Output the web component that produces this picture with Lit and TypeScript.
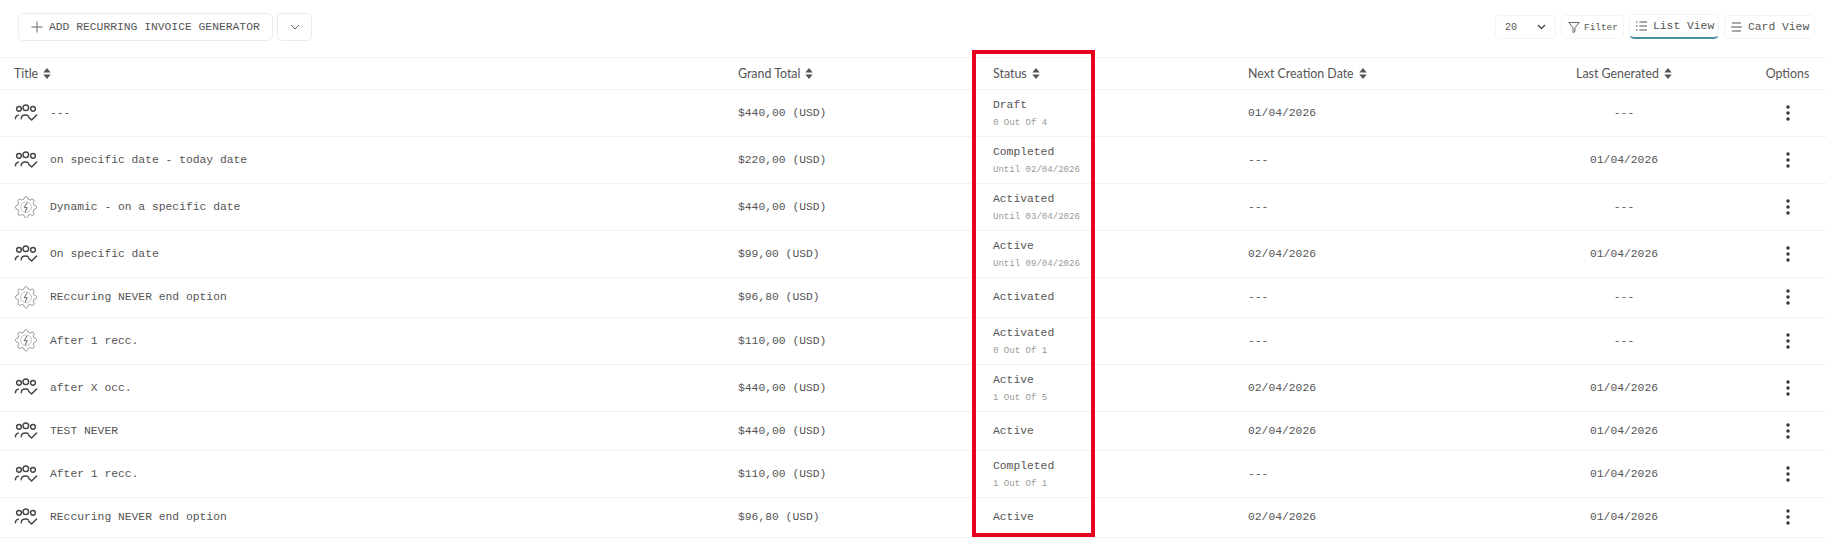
import { LitElement, css, html, svg } from 'lit';
import { customElement } from 'lit/decorators.js';

type Row = {
  kind: 'people' | 'gear';
  title: string;
  total: string;
  status: string;
  sub?: string;
  next: string;
  last: string;
};

const rows: Row[] = [
  { kind: 'people', title: '---', total: '$440,00 (USD)', status: 'Draft', sub: '0 Out Of 4', next: '01/04/2026', last: '---' },
  { kind: 'people', title: 'on specific date - today date', total: '$220,00 (USD)', status: 'Completed', sub: 'Until 02/04/2026', next: '---', last: '01/04/2026' },
  { kind: 'gear', title: 'Dynamic - on a specific date', total: '$440,00 (USD)', status: 'Activated', sub: 'Until 03/04/2026', next: '---', last: '---' },
  { kind: 'people', title: 'On specific date', total: '$99,00 (USD)', status: 'Active', sub: 'Until 09/04/2026', next: '02/04/2026', last: '01/04/2026' },
  { kind: 'gear', title: 'REccuring NEVER end option', total: '$96,80 (USD)', status: 'Activated', next: '---', last: '---' },
  { kind: 'gear', title: 'After 1 recc.', total: '$110,00 (USD)', status: 'Activated', sub: '0 Out Of 1', next: '---', last: '---' },
  { kind: 'people', title: 'after X occ.', total: '$440,00 (USD)', status: 'Active', sub: '1 Out Of 5', next: '02/04/2026', last: '01/04/2026' },
  { kind: 'people', title: 'TEST NEVER', total: '$440,00 (USD)', status: 'Active', next: '02/04/2026', last: '01/04/2026' },
  { kind: 'people', title: 'After 1 recc.', total: '$110,00 (USD)', status: 'Completed', sub: '1 Out Of 1', next: '---', last: '01/04/2026' },
  { kind: 'people', title: 'REccuring NEVER end option', total: '$96,80 (USD)', status: 'Active', next: '02/04/2026', last: '01/04/2026' },
];

// gear outline with 8 rounded cogs
const gearPath = () => {
  const pts: string[] = [];
  const cogs = 8;
  for (let i = 0; i < cogs; i++) {
    const a = (i / cogs) * Math.PI * 2;
    const step = (Math.PI * 2) / cogs;
    const p = (r: number, t: number) =>
      `${(12 + r * Math.cos(t)).toFixed(2)} ${(11 + r * Math.sin(t)).toFixed(2)}`;
    const start = p(8.6, a - step * 0.28);
    const end = p(8.6, a + step * 0.28);
    const c1 = p(11.6, a - step * 0.2);
    const c2 = p(11.6, a + step * 0.2);
    const nextStart = p(8.6, a + step * 0.72);
    const mid = p(8, a + step * 0.5);
    pts.push(`${i === 0 ? 'M' : 'L'}${start} C${c1} ${c2} ${end} Q${mid} ${nextStart}`);
  }
  return pts.join(' ') + ' Z';
};

const peopleIcon = html`<svg class="row-icon" viewBox="0 0 24 22" fill="none" stroke="#444" stroke-linecap="round" stroke-linejoin="round">
  <circle cx="5" cy="6.6" r="2.4" stroke-width="1.4"></circle>
  <circle cx="11.8" cy="5.6" r="2.8" stroke-width="1.4"></circle>
  <circle cx="19" cy="6.6" r="2.4" stroke-width="1.4"></circle>
  <path d="M1.4 16.5c0-2 1.2-3.2 3-3.6" stroke-width="1.4"></path>
  <path d="M7.2 16.5c0-2.4 1.6-3.8 4.2-3.8 1.3 0 2.4.4 3.1 1.1" stroke-width="1.4"></path>
  <path d="M14.6 15l3 2.8 5-5" stroke-width="1.5"></path>
</svg>`;

const gearIcon = html`<svg class="row-icon" viewBox="0 0 24 22" fill="none" stroke="#777" stroke-linejoin="round">
  <path d=${gearPath()} stroke-width=".8"></path>
  <circle cx="12" cy="11" r="5.4" stroke="#aaa" stroke-width=".7"></circle>
  <path d="M13 6.8l-2.8 4.6h3l-1.8 4" stroke="#555" stroke-width=".9" stroke-linecap="round"></path>
</svg>`;

const sortIcon = html`<svg class="sort" viewBox="0 0 8 11" fill="#555">
  <path d="M4 0l3.7 4.6H.3z"></path>
  <path d="M4 11L.3 6.4h7.4z"></path>
</svg>`;

const kebab = html`<svg class="kebab" viewBox="0 0 6 16" fill="#333">
  ${[2, 8, 14].map((y) => svg`<circle cx="3" cy=${y} r="1.7"></circle>`)}
</svg>`;

@customElement('app-root')
export class AppRoot extends LitElement {
  static styles = css`
    :host {
      display: block;
      position: relative;
      height: 540px;
      background: #fff;
      color: #555;
      font-family: 'Liberation Mono', monospace;
      font-size: 11.33px;
      overflow: hidden;
    }

    .toolbar {
      height: 57px;
      box-sizing: border-box;
      display: flex;
      justify-content: space-between;
      align-items: flex-start;
      padding: 13px 12px 0 18px;
    }
    .left,
    .right {
      display: flex;
    }
    .left {
      gap: 4px;
    }
    .right {
      gap: 5px;
      padding-top: 2px;
    }

    .btn {
      display: flex;
      align-items: center;
      box-sizing: border-box;
      border: 1px solid #ececec;
      border-radius: 5px;
      background: #fff;
    }
    .add {
      width: 255px;
      height: 28px;
      padding-left: 12px;
      gap: 6px;
    }
    .more {
      width: 35px;
      height: 28px;
      justify-content: center;
    }
    .select {
      width: 61px;
      height: 24px;
      padding: 0 9px;
      justify-content: space-between;
      border-color: #f3f3f3;
      font-size: 10px;
    }
    .filter {
      width: 63px;
      height: 24px;
      padding-left: 6px;
      gap: 4px;
      border-color: #f3f3f3;
      font-size: 9.4px;
    }
    .list {
      width: 90px;
      height: 25px;
      margin-top: -1px;
      padding-left: 6px;
      gap: 6px;
      border-color: #f3f3f3;
      border-bottom: 2px solid #4a8fa5;
    }
    .card {
      width: 91px;
      height: 24px;
      padding-left: 6px;
      gap: 6px;
      border-color: #f3f3f3;
    }

    .head,
    .row {
      display: grid;
      grid-template-columns: 724px 255px 255px 266px 248px 79px;
      border-bottom: 1px solid #f2f2f2;
    }
    .head {
      height: 33px;
      box-sizing: border-box;
      border-top: 1px solid #f2f2f2;
      align-items: center;
      font-family: Lato, sans-serif;
      font-size: 12.4px;
    }
    .cell {
      display: flex;
      align-items: center;
      gap: 5px;
      padding-left: 14px;
    }
    .center {
      justify-content: center;
      padding-left: 0;
    }
    .sort {
      width: 8px;
      height: 11px;
    }

    .row {
      padding: 8px 0;
      align-items: center;
    }
    .name {
      gap: 12px;
    }
    .row-icon {
      width: 24px;
      height: 22.5px;
      flex: none;
    }
    .status {
      display: flex;
      flex-direction: column;
      gap: 5px;
      padding-left: 14px;
      line-height: 14px;
    }
    .sub {
      font-size: 9.05px;
      line-height: 11px;
      color: #999;
    }
    .kebab {
      width: 6px;
      height: 16px;
    }

    .highlight {
      position: absolute;
      left: 972px;
      top: 50px;
      width: 123px;
      height: 487px;
      box-sizing: border-box;
      border: 4px solid #e8001f;
      pointer-events: none;
    }
  `;

  renderRow(r: Row) {
    return html`
      <div class="row">
        <div class="cell name">${r.kind === 'people' ? peopleIcon : gearIcon}<span>${r.title}</span></div>
        <div class="cell">${r.total}</div>
        <div class="status">
          <span>${r.status}</span>
          ${r.sub ? html`<span class="sub">${r.sub}</span>` : ''}
        </div>
        <div class="cell">${r.next}</div>
        <div class="cell center">${r.last}</div>
        <div class="cell center">${kebab}</div>
      </div>
    `;
  }

  render() {
    return html`
      <div class="toolbar">
        <div class="left">
          <div class="btn add">
            <svg width="12" height="12" viewBox="0 0 12 12" stroke="#666" fill="none"><path d="M6 .5v11M.5 6h11"></path></svg>
            <span>ADD RECURRING INVOICE GENERATOR</span>
          </div>
          <div class="btn more">
            <svg width="10" height="6" viewBox="0 0 10 6" stroke="#666" fill="none"><path d="M1 1l4 4 4-4"></path></svg>
          </div>
        </div>
        <div class="right">
          <div class="btn select">
            <span>20</span>
            <svg width="9" height="6" viewBox="0 0 9 6" stroke="#444" stroke-width="1.3" fill="none"><path d="M1 1l3.5 3.5L8 1"></path></svg>
          </div>
          <div class="btn filter">
            <svg width="12" height="12" viewBox="0 0 12 12" stroke="#666" fill="none" stroke-linejoin="round"><path d="M.8 1.5h10.4L7 6.6v3.9L5 11.5V6.6z"></path></svg>
            <span>Filter</span>
          </div>
          <div class="btn list">
            <svg width="11" height="10" viewBox="0 0 11 10" stroke="#555" stroke-width="1.2" fill="none"><path d="M0 1h1.6M3.4 1H11M0 5h1.6M3.4 5H11M0 9h1.6M3.4 9H11"></path></svg>
            <span>List View</span>
          </div>
          <div class="btn card">
            <svg width="11" height="10" viewBox="0 0 11 10" stroke="#555" stroke-width="1.2" fill="none"><path d="M1 1h9M0 5h11M1 9h9"></path></svg>
            <span>Card View</span>
          </div>
        </div>
      </div>

      <div class="head">
        <div class="cell">Title ${sortIcon}</div>
        <div class="cell">Grand Total ${sortIcon}</div>
        <div class="cell">Status ${sortIcon}</div>
        <div class="cell">Next Creation Date ${sortIcon}</div>
        <div class="cell center">Last Generated ${sortIcon}</div>
        <div class="cell center">Options</div>
      </div>
      ${rows.map((r) => this.renderRow(r))}

      <div class="highlight"></div>
    `;
  }
}
